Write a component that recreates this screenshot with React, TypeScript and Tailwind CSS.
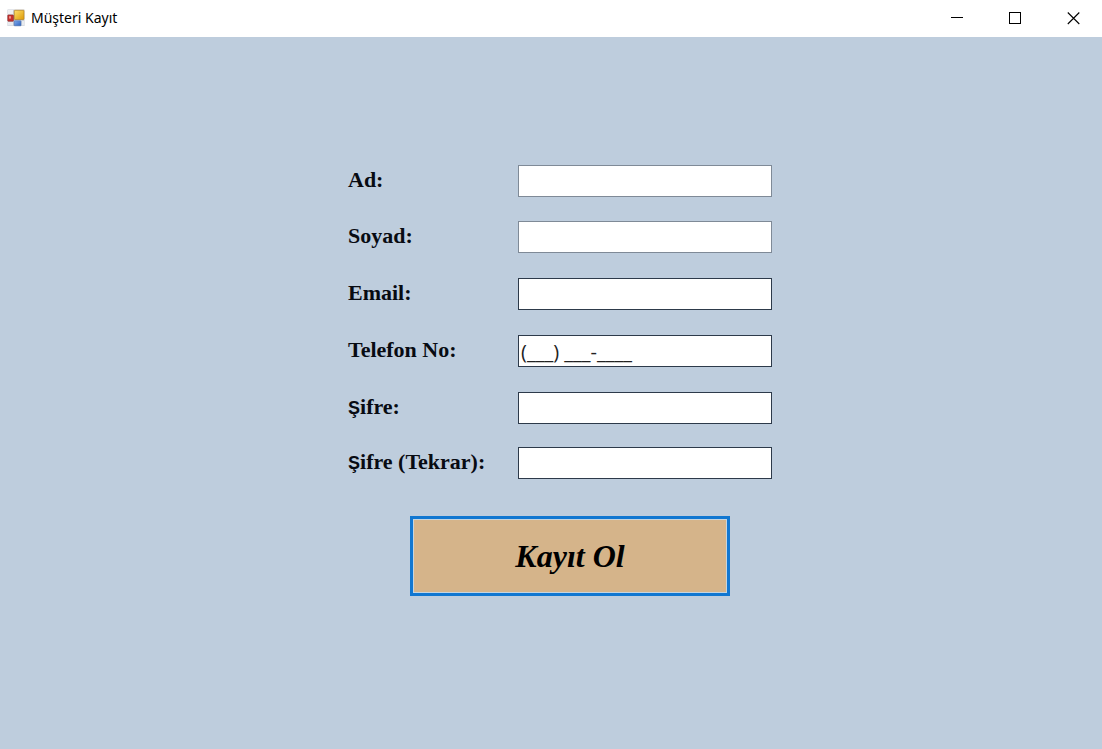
import React from "react";

type Field = {
  id: string;
  label: string;
  type: string;
  border: string;
  value?: string;
};

const fields: Field[] = [
  { id: "ad", label: "Ad:", type: "text", border: "border-[#7f8a97]" },
  { id: "soyad", label: "Soyad:", type: "text", border: "border-[#7f8a97]" },
  { id: "email", label: "Email:", type: "email", border: "border-[#2d3a4a]" },
  { id: "telefon", label: "Telefon No:", type: "tel", border: "border-[#2d3a4a]", value: "(___) ___-____" },
  { id: "sifre", label: "Şifre:", type: "password", border: "border-[#2d3a4a]" },
  { id: "tekrar", label: "Şifre (Tekrar):", type: "password", border: "border-[#2d3a4a]" },
];

function FormIcon() {
  return (
    <svg width="18" height="18" viewBox="0 0 18 18" aria-hidden="true">
      <defs>
        <linearGradient id="gold" x1="0" y1="0" x2="1" y2="1">
          <stop offset="0" stopColor="#ffe06a" />
          <stop offset="1" stopColor="#dd9a08" />
        </linearGradient>
        <linearGradient id="blue" x1="0" y1="0" x2="1" y2="1">
          <stop offset="0" stopColor="#7fabee" />
          <stop offset="1" stopColor="#2e62bd" />
        </linearGradient>
      </defs>
      <rect x="0.5" y="0.5" width="17" height="16.5" fill="#c9ced6" />
      <rect x="1" y="1" width="5" height="4.5" fill="#eef0f3" />
      <rect x="1" y="12.5" width="5" height="4" fill="#e8ebef" />
      <rect x="14.5" y="12" width="2.5" height="4.5" fill="#e8ebef" />
      <rect x="7.3" y="1.3" width="9.7" height="9.2" rx="0.5" fill="url(#gold)" stroke="#b8831c" strokeWidth="0.7" />
      <rect x="0.8" y="6" width="5.6" height="6.2" rx="0.5" fill="#c92f2c" stroke="#8f2b2b" strokeWidth="0.7" />
      <rect x="2" y="7.2" width="2" height="2.4" fill="#ee8f88" />
      <rect x="7.2" y="11.8" width="6.8" height="5" rx="0.5" fill="url(#blue)" stroke="#4a6fae" strokeWidth="0.6" />
    </svg>
  );
}

function TitleBar() {
  return (
    <header className="flex h-[37px] shrink-0 items-center justify-between bg-white pl-[7px]">
      <div className="flex items-center gap-1.5 pb-0.5">
        <FormIcon />
        <h1 className="font-['Noto_Sans',sans-serif] text-sm leading-5 text-black">Müşteri Kayıt</h1>
      </div>
      <div className="flex h-full items-center">
        <button type="button" aria-label="Simge durumuna küçült" className="flex h-full w-[58px] items-center justify-center">
          <svg width="13" height="13" viewBox="0 0 13 13" stroke="#000" fill="none" shapeRendering="crispEdges">
            <path d="M0 5.5H12" />
          </svg>
        </button>
        <button type="button" aria-label="Ekranı kapla" className="flex h-full w-[58px] items-center justify-center">
          <svg width="13" height="13" viewBox="0 0 13 13" stroke="#000" fill="none" shapeRendering="crispEdges">
            <path d="M0.5 0.5H11.5V11.5H0.5Z" />
          </svg>
        </button>
        <button type="button" aria-label="Kapat" className="flex h-full w-[58px] items-center justify-center">
          <svg width="13" height="13" viewBox="0 0 13 13" stroke="#000" strokeWidth="1.1" fill="none">
            <path d="M0.8 0.5L12.3 12M12.3 0.5L0.8 12" />
          </svg>
        </button>
      </div>
    </header>
  );
}

function Label({ field }: { field: Field }) {
  const cedilla = field.label.startsWith("Ş");
  return (
    <label
      htmlFor={field.id}
      className="h-[30px] whitespace-nowrap font-['Liberation_Serif',serif] text-[22px] leading-[30px] font-bold text-[#080b12]"
    >
      {cedilla ? (
        <>
          <span className="font-['Liberation_Sans',sans-serif] text-[18px]">Ş</span>
          {field.label.slice(1)}
        </>
      ) : (
        field.label
      )}
    </label>
  );
}

export default function App() {
  return (
    <div className="flex min-h-screen flex-col bg-[#becddd]">
      <TitleBar />
      <main className="flex grow flex-col items-center pt-32 pl-[18px]">
        <form onSubmit={(e) => e.preventDefault()}>
          <div className="grid grid-cols-[170px_254px] grid-rows-[56px_57px_57px_57px_55px_32px] items-start">
            {fields.map((field) => (
              <React.Fragment key={field.id}>
                <Label field={field} />
                <input
                  id={field.id}
                  type={field.type}
                  defaultValue={field.value}
                  className={`h-8 w-full border bg-white px-0.5 font-['Open_Sans',sans-serif] text-xl leading-7 text-[#222] outline-none ${field.border}`}
                />
              </React.Fragment>
            ))}
          </div>
          <button
            type="submit"
            className="mt-[37px] ml-[62px] h-20 w-80 border-3 border-[#1177d1] bg-[#d5b48a] font-['Liberation_Serif',serif] text-[32px] font-bold text-black italic inset-ring inset-ring-[#c5d5e0]"
          >
            Kayıt Ol
          </button>
        </form>
      </main>
    </div>
  );
}
